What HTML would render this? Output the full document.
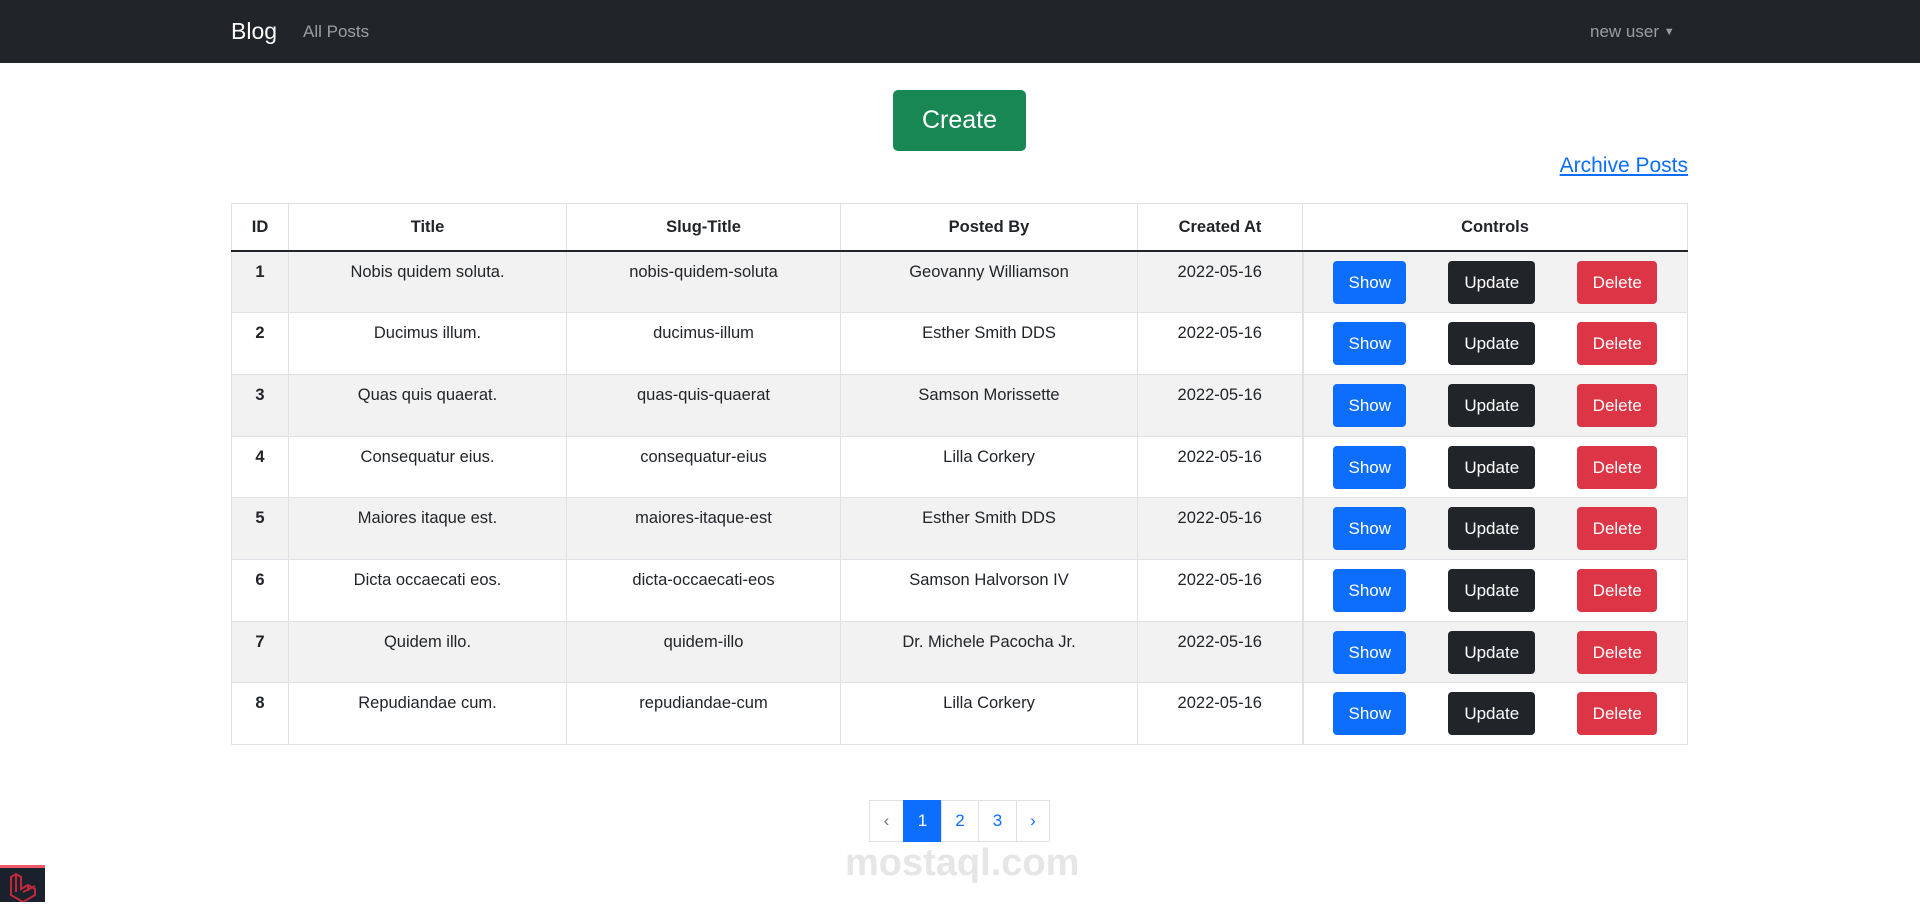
<!DOCTYPE html>
<html><head><meta charset="utf-8"><style>
*{box-sizing:border-box;margin:0;padding:0}
body{width:1920px;height:902px;overflow:hidden;background:#fff;font-family:"Liberation Sans",sans-serif;color:#212529;position:relative}
.nav{position:absolute;left:0;top:0;width:1920px;height:63px;background:#212529}
.nav span{position:absolute;top:0;line-height:63px}
.create{position:absolute;left:893px;top:90px;width:133px;height:61px;background:#198754;color:#fff;border-radius:5px;font-size:25px;text-align:center;line-height:61px}
.arch{position:absolute;right:232px;top:154px;font-size:21px;color:#0d6efd;text-decoration:underline}
table{position:absolute;left:231px;top:203px;width:1457px;border-collapse:collapse;font-size:16.5px}
th,td{border:1px solid #dee2e6;text-align:center;vertical-align:top}
th{height:47px;line-height:46px;font-weight:bold;border-bottom:2px solid #212529}
td{height:61.7px;padding-top:11px}
tr.s td{background:#f2f2f2}
td.id{font-weight:bold}
td.c{padding-top:9px;border-left:2px solid #dee2e6}
.b{display:inline-block;height:43px;line-height:43px;color:#fff;border-radius:4px;font-size:17px;text-align:center;vertical-align:top}
.pg{position:absolute;top:800px;height:42px;border:1px solid #dee2e6;font-size:17px;color:#0d6efd;text-align:center;line-height:40px}
.wm{position:absolute;left:845px;top:842px;font-size:38px;font-weight:bold;color:#e6e6e6;letter-spacing:0}
</style></head><body>
<div class="wm">mostaql.com</div>
<div class="nav">
<span style="left:231px;color:#fff;font-size:23px">Blog</span>
<span style="left:303px;color:rgba(255,255,255,.55);font-size:17px">All Posts</span>
<span style="left:1590px;color:rgba(255,255,255,.55);font-size:17px">new user <span style="position:static;font-size:11px;vertical-align:2px">▼</span></span>
</div>
<div class="create">Create</div>
<div class="arch">Archive Posts</div>
<table>
<tr><th style="width:57px">ID</th><th style="width:278px">Title</th><th style="width:274px">Slug-Title</th><th style="width:297px">Posted By</th><th style="width:165px">Created At</th><th>Controls</th></tr>
<tr class="s"><td class="id">1</td><td>Nobis quidem soluta.</td><td>nobis-quidem-soluta</td><td>Geovanny Williamson</td><td>2022-05-16</td><td class="c">X</td></tr>
<tr><td class="id">2</td><td>Ducimus illum.</td><td>ducimus-illum</td><td>Esther Smith DDS</td><td>2022-05-16</td><td class="c">X</td></tr>
<tr class="s"><td class="id">3</td><td>Quas quis quaerat.</td><td>quas-quis-quaerat</td><td>Samson Morissette</td><td>2022-05-16</td><td class="c">X</td></tr>
<tr><td class="id">4</td><td>Consequatur eius.</td><td>consequatur-eius</td><td>Lilla Corkery</td><td>2022-05-16</td><td class="c">X</td></tr>
<tr class="s"><td class="id">5</td><td>Maiores itaque est.</td><td>maiores-itaque-est</td><td>Esther Smith DDS</td><td>2022-05-16</td><td class="c">X</td></tr>
<tr><td class="id">6</td><td>Dicta occaecati eos.</td><td>dicta-occaecati-eos</td><td>Samson Halvorson IV</td><td>2022-05-16</td><td class="c">X</td></tr>
<tr class="s"><td class="id">7</td><td>Quidem illo.</td><td>quidem-illo</td><td>Dr. Michele Pacocha Jr.</td><td>2022-05-16</td><td class="c">X</td></tr>
<tr><td class="id">8</td><td>Repudiandae cum.</td><td>repudiandae-cum</td><td>Lilla Corkery</td><td>2022-05-16</td><td class="c">X</td></tr>
</table>
<script>
document.querySelectorAll('td.c').forEach(function(t){t.innerHTML='<span class="b" style="width:73px;background:#0d6efd">Show</span><span class="b" style="width:87px;background:#212529;margin-left:42px">Update</span><span class="b" style="width:80px;background:#dc3545;margin-left:42px">Delete</span>';});
</script>
<div class="pg" style="left:869px;width:35px;color:#6c757d">‹</div>
<div class="pg" style="left:903px;width:39px;background:#0d6efd;color:#fff;border-color:#0d6efd">1</div>
<div class="pg" style="left:941px;width:38px">2</div>
<div class="pg" style="left:978px;width:39px">3</div>
<div class="pg" style="left:1016px;width:34px">›</div>
<div style="position:absolute;left:0;top:865px;width:45px;height:37px;background:#1a202c;border-top:3px solid #ef5a66">
<svg width="45" height="34" viewBox="0 0 45 34"><path d="M11 9l5-3 5 3v12l7-4 7 4v6l-12 7-12-7z M16 6v18 M28 17v6 M23 24l12-6" fill="none" stroke="#c0283a" stroke-width="2"/></svg></div>
</body></html>
